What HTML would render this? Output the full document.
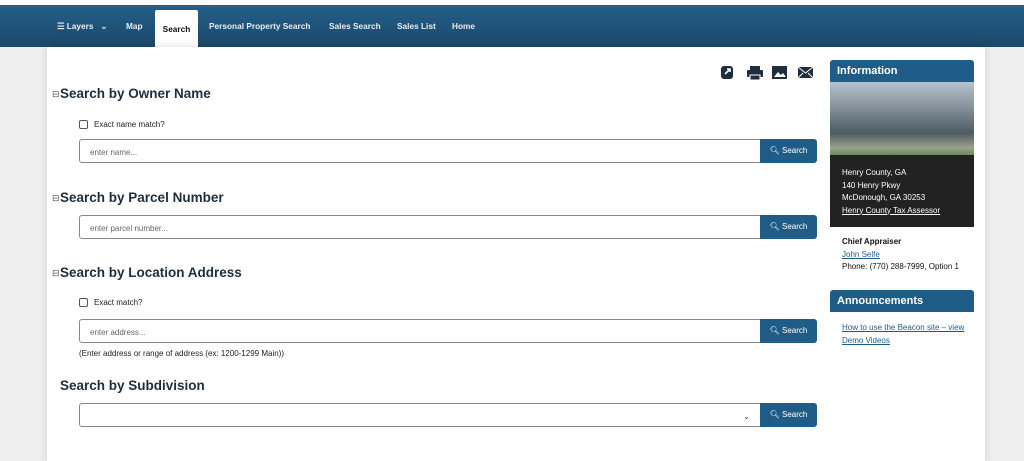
<!DOCTYPE html>
<html><head><style>
*{box-sizing:border-box;margin:0;padding:0}
body{width:1024px;height:461px;overflow:hidden;background:#efefef;font-family:"Liberation Sans",sans-serif;position:relative}
.top{position:absolute;top:0;left:0;width:1024px;height:5px;background:#fff}
.nav{position:absolute;top:5px;left:0;width:1024px;height:42px;background:linear-gradient(#245f8a,#1c4769)}
.nav span{position:absolute;top:16px;color:#e8eef4;font-size:8.3px;font-weight:bold}
.nav .act{top:5px;left:155px;width:43px;height:38px;background:#fff;border-radius:2px;color:#111;text-align:center;line-height:38px;top:5px}
.panel{position:absolute;top:47px;left:47px;width:938px;height:414px;background:#fff;box-shadow:0 0 8px rgba(0,0,0,.15)}
h2{position:absolute;left:60px;font-size:13.5px;color:#1f2d3d;font-weight:bold}
h2 i{font-style:normal;font-size:9px;color:#555;position:absolute;left:-8px;top:3px;font-weight:normal}
.inp{position:absolute;left:79px;width:682px;height:24px;border:1px solid #888;border-radius:3px 0 0 3px;font-size:8px;color:#666;padding:8px 10px}
.btn{position:absolute;left:760px;width:57px;height:24px;background:#1f5c88;border-radius:0 3px 3px 0;color:#fff;font-size:8px;line-height:24px;text-align:center}
.chk{position:absolute;left:79px;font-size:8px;color:#222}
.chk b{display:inline-block;width:9px;height:9px;border:1px solid #555;border-radius:2px;vertical-align:-2px;margin-right:6px}
.side{position:absolute;left:830px;width:144px}
.hd{background:#1f5c88;color:#fff;font-size:11px;font-weight:bold;height:22px;line-height:22px;padding-left:7px;border-radius:3px 3px 0 0}
.s{font-size:8px;line-height:12.5px;position:absolute;left:842px}
a{color:#1f5c88}
</style></head><body>
<div class="top"></div>
<div class="nav">
<span style="left:57px">&#9776; Layers &nbsp;&nbsp;⌄</span>
<span style="left:126px">Map</span>
<span class="act">Search</span>
<span style="left:209px">Personal Property Search</span>
<span style="left:329px">Sales Search</span>
<span style="left:397px">Sales List</span>
<span style="left:452px">Home</span>
</div>
<div class="panel"></div>
<svg style="position:absolute;left:720px;top:65px" width="95" height="15">
<rect x="1" y="1" width="12" height="13" rx="3" fill="#1f2d3d"/><path d="M5 9l5-5M7 4h3v3" stroke="#fff" stroke-width="1.6" fill="none"/>
<rect x="27" y="5" width="16" height="7" rx="1" fill="#1f2d3d"/><rect x="30" y="1" width="10" height="4" fill="#1f2d3d"/><rect x="30" y="10" width="10" height="5" fill="#1f2d3d" stroke="#fff"/>
<rect x="52" y="1" width="15" height="13" fill="#1f2d3d"/><path d="M54 12l4-5 3 3 2-2 3 4z" fill="#fff"/>
<rect x="78" y="2" width="15" height="11" fill="#1f2d3d"/><path d="M78 2l7.5 6 7.5-6M78 13l5-5M93 13l-5-5" stroke="#fff" fill="none"/>
</svg>
<h2 style="top:86px"><i>⊟</i>Search by Owner Name</h2>
<div class="chk" style="top:120px"><b></b>Exact name match?</div>
<div class="inp" style="top:139px">enter name...</div><div class="btn" style="top:139px">&#x1F50D;&#xFE0E; Search</div>
<h2 style="top:190px"><i>⊟</i>Search by Parcel Number</h2>
<div class="inp" style="top:215px">enter parcel number...</div><div class="btn" style="top:215px">&#x1F50D;&#xFE0E; Search</div>
<h2 style="top:265px"><i>⊟</i>Search by Location Address</h2>
<div class="chk" style="top:298px"><b></b>Exact match?</div>
<div class="inp" style="top:319px">enter address...</div><div class="btn" style="top:319px">&#x1F50D;&#xFE0E; Search</div>
<div class="chk" style="top:349px">(Enter address or range of address (ex: 1200-1299 Main))</div>
<h2 style="top:378px">Search by Subdivision</h2>
<div class="inp" style="top:403px;color:#333;text-align:right">⌄</div><div class="btn" style="top:403px">&#x1F50D;&#xFE0E; Search</div>
<div class="side" style="top:60px"><div class="hd">Information</div>
<div style="height:73px;background:linear-gradient(180deg,#b8c4cc 0,#7c8a94 40%,#4d5a60 70%,#9aa38f 90%,#6a8a50 100%)"></div>
<div style="height:72px;background:#222"></div></div>
<div class="s" style="top:167px;color:#fff">Henry County, GA<br>140 Henry Pkwy<br>McDonough, GA 30253<br><u>Henry County Tax Assessor</u></div>
<div class="s" style="top:236px;color:#111"><b>Chief Appraiser</b><br><a href="#"><u>John Selfe</u></a><br>Phone: (770) 288-7999, Option 1</div>
<div class="side" style="top:290px"><div class="hd">Announcements</div></div>
<div class="s" style="top:322px"><a href="#">How to use the Beacon site – view<br>Demo Videos</a></div>
</body></html>
